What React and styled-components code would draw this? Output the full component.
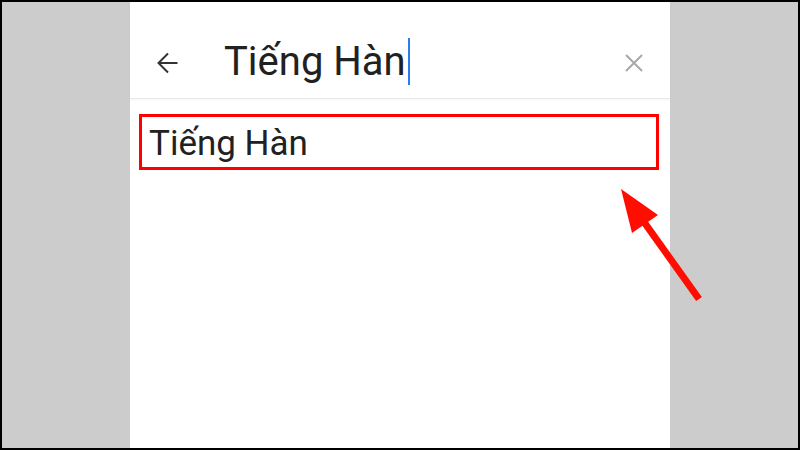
import React from 'react'
import styled, { createGlobalStyle } from 'styled-components'

const GlobalStyle = createGlobalStyle`
  html, body {
    margin: 0;
    padding: 0;
    width: 800px;
    height: 450px;
    overflow: hidden;
    font-family: Roboto, "Noto Sans", "Liberation Sans", sans-serif;
  }
`

const Frame = styled.div`
  position: relative;
  box-sizing: border-box;
  width: 800px;
  height: 450px;
  border: 2px solid #000;
  background: #cccccc;
  display: flex;
  justify-content: center;
`

const Screen = styled.main`
  width: 540px;
  height: 100%;
  background: #fff;
  display: flex;
  flex-direction: column;
`

const SearchBar = styled.header`
  box-sizing: border-box;
  height: 97px;
  padding: 26px 27px 0 26px;
  display: flex;
  align-items: center;
  border-bottom: 1px solid #e8e8e8;
  box-shadow: 0 1px 2px rgba(0, 0, 0, 0.04);
`

const IconButton = styled.button`
  border: 0;
  background: none;
  padding: 0;
  display: flex;
  align-items: center;
  justify-content: center;
  color: ${p => p.$color};
`

const Query = styled.div`
  flex: 1;
  margin: 0 0 3px 46px;
  display: flex;
  align-items: center;
  font-size: 40px;
  color: #212121;
  line-height: 1;
`

const Caret = styled.span`
  display: inline-block;
  width: 2px;
  height: 47px;
  margin-left: 2px;
  background: #2b7de9;
`

const Suggestions = styled.ul`
  list-style: none;
  margin: 0;
  padding: 0;
`

const Suggestion = styled.li`
  box-sizing: border-box;
  height: 56px;
  margin: 15px 11px 0 9px;
  padding: 3px 0 0 7px;
  display: flex;
  align-items: center;
  font-size: 35px;
  color: #212121;
  border: 3px solid ${p => (p.$marked ? '#ff0000' : 'transparent')};
`

const Pointer = styled.svg`
  position: absolute;
  left: 610px;
  top: 180px;
  pointer-events: none;
`

const BackArrow = () => (
  <svg width="22" height="22" viewBox="0 0 22 22" fill="none" stroke="currentColor" strokeWidth="2">
    <path d="M21.5 11H2" />
    <path d="M12 1.5L2.5 11L12 20.5" />
  </svg>
)

const Cross = () => (
  <svg width="18" height="18" viewBox="0 0 18 18" fill="none" stroke="currentColor" strokeWidth="2">
    <path d="M1 1L17 17M17 1L1 17" />
  </svg>
)

const App = () => {
  return (
    <>
      <GlobalStyle />
      <Frame>
        <Screen>
          <SearchBar>
            <IconButton $color="#333">
              <BackArrow />
            </IconButton>
            <Query>
              Tiếng Hàn
              <Caret />
            </Query>
            <IconButton $color="#a8a8a8">
              <Cross />
            </IconButton>
          </SearchBar>
          <Suggestions>
            <Suggestion $marked>Tiếng Hàn</Suggestion>
          </Suggestions>
        </Screen>
        <Pointer width="100" height="125" viewBox="0 0 100 125">
          <line x1="32" y1="40" x2="87" y2="117" stroke="#ff0d00" strokeWidth="7" />
          <polygon points="9,7 46,33 20,51" fill="#ff0d00" />
        </Pointer>
      </Frame>
    </>
  )
}

export default App
